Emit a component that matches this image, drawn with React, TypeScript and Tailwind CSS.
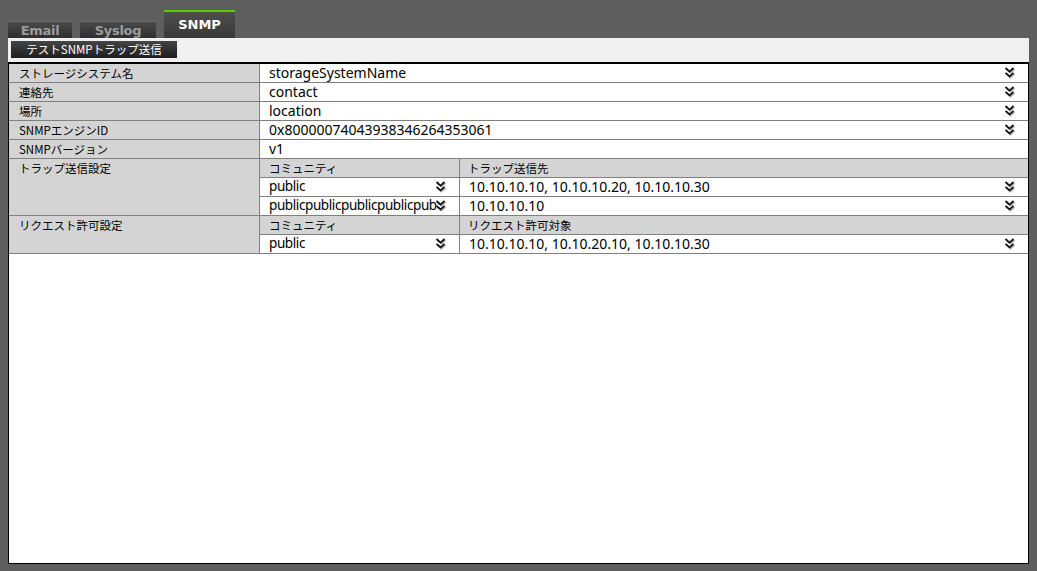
import React from "react";

const jp = { fontFamily: '"Noto Sans CJK JP", "Noto Sans", sans-serif' };
const latin = { fontFamily: '"Noto Sans", "Noto Sans CJK JP", sans-serif' };

function Chevrons() {
  return (
    <svg width="13" height="13" viewBox="0 0 13 13" className="shrink-0">
      <path d="M2.5 2 L6.5 5.6 L10.5 2 M2.5 6.8 L6.5 10.4 L10.5 6.8" fill="none" stroke="#a8a8a8" strokeWidth="2" transform="translate(0.9 0.9)" />
      <path d="M2.5 2 L6.5 5.6 L10.5 2 M2.5 6.8 L6.5 10.4 L10.5 6.8" fill="none" stroke="#111" strokeWidth="1.7" />
    </svg>
  );
}

function Label({ text, className = "" }: { text: string; className?: string }) {
  return (
    <div className={`w-[251px] shrink-0 bg-[#d4d4d4] border-r border-[#808080] pl-[10px] text-[11.5px] leading-[18px] text-black ${className}`} style={jp}>
      {text}
    </div>
  );
}

function Value({ text, select = false }: { text: string; select?: boolean }) {
  return (
    <div className="flex flex-1 items-center justify-between pb-[1px] pl-[9px] pr-[12px] text-[14px] text-black" style={latin}>
      <span>{text}</span>
      {select && <Chevrons />}
    </div>
  );
}

const rows = [
  { label: "ストレージシステム名", value: "storageSystemName", select: true },
  { label: "連絡先", value: "contact", select: true },
  { label: "場所", value: "location", select: true },
  { label: "SNMPエンジンID", value: "0x80000074043938346264353061", select: true },
  { label: "SNMPバージョン", value: "v1", select: false },
];

function SubTable({ head: [h1, h2], items }: { head: [string, string]; items: [string, string][] }) {
  return (
    <div className="flex flex-1 flex-col">
      <div className="flex h-[19px] border-b border-[#808080] bg-[#d4d4d4] text-[11.5px] leading-[18px]" style={jp}>
        <div className="w-[200px] shrink-0 border-r border-[#808080] pl-[9px]">{h1}</div>
        <div className="flex-1 pl-[8px]">{h2}</div>
      </div>
      {items.map(([c, d], i) => (
        <div key={i} className="flex h-[19px] border-b border-[#808080]">
          <div className="flex w-[200px] shrink-0 items-center overflow-hidden border-r border-[#808080] pb-[1px] pl-[9px] pr-[12px] text-[13.5px] tracking-[-0.4px] whitespace-nowrap" style={latin}>
            <span className="min-w-0 flex-1">{c}</span>
            <Chevrons />
          </div>
          <div className="flex flex-1 items-center justify-between pb-[1px] pl-[9px] pr-[12px] text-[14px]" style={latin}>
            <span>{d}</span>
            <Chevrons />
          </div>
        </div>
      ))}
    </div>
  );
}

export default function App() {
  const tabFont = { fontFamily: '"DejaVu Sans", Verdana, sans-serif' };
  return (
    <div className="flex h-[571px] w-full flex-col bg-[#5e5e5e] px-[8px] pb-[7px]">
      <div className="flex h-[38px] shrink-0 items-end gap-[8px]">
        <div className="flex h-[17px] w-[64px] items-center justify-center border-t border-[#6a6a6a] bg-gradient-to-b from-[#4a4a4a] to-[#2f2f2f] pt-[2px] text-[13px] font-bold tracking-[-0.3px] text-[#9c9c9c]" style={tabFont}>
          Email
        </div>
        <div className="flex h-[17px] w-[76px] items-center justify-center border-t border-[#6a6a6a] bg-gradient-to-b from-[#4a4a4a] to-[#2f2f2f] pt-[2px] text-[13px] font-bold tracking-[-0.3px] text-[#9c9c9c]" style={tabFont}>
          Syslog
        </div>
        <div className="flex h-[28px] w-[71px] justify-center border-t-2 border-[#5ccc00] bg-gradient-to-b from-[#4e4e4e] to-[#383838] pt-[3px] text-[13px] font-bold text-white" style={tabFont}>
          SNMP
        </div>
      </div>
      <div className="flex flex-1 flex-col bg-[#f0f0f0]">
        <div className="h-[24px] shrink-0 px-[3px] pt-[3px]">
          <div className="flex h-[17px] w-[166px] items-center justify-center bg-gradient-to-b from-[#454545] to-[#1e1e1e] text-[11.5px] text-white" style={jp}>
            テストSNMPトラップ送信
          </div>
        </div>
        <div className="flex flex-1 flex-col border border-t-2 border-black bg-white">
          {rows.map((r) => (
            <div key={r.label} className="flex h-[19px] border-b border-[#808080]">
              <Label text={r.label} />
              <Value text={r.value} select={r.select} />
            </div>
          ))}
          <div className="flex">
            <Label text="トラップ送信設定" className="border-b border-b-[#808080]" />
            <SubTable
              head={["コミュニティ", "トラップ送信先"]}
              items={[
                ["public", "10.10.10.10, 10.10.10.20, 10.10.10.30"],
                ["publicpublicpublicpublicpub", "10.10.10.10"],
              ]}
            />
          </div>
          <div className="flex">
            <Label text="リクエスト許可設定" className="border-b border-b-[#808080]" />
            <SubTable
              head={["コミュニティ", "リクエスト許可対象"]}
              items={[["public", "10.10.10.10, 10.10.20.10, 10.10.10.30"]]}
            />
          </div>
        </div>
      </div>
    </div>
  );
}
